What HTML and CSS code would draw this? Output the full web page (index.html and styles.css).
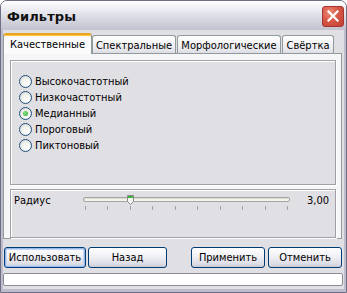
FILE: index.html
```html
<!DOCTYPE html>
<html>
<head>
<meta charset="utf-8">
<link rel="stylesheet" href="styles.css">
</head>
<body>
<div class="window">
  <div class="titlebar">
    <span class="title">Фильтры</span>
    <span class="close">
      <svg width="22" height="21" viewBox="0 0 22 21">
        <path d="M6.5 5.5 L15.5 14.5 M15.5 5.5 L6.5 14.5" stroke="#fff" stroke-width="2.2" stroke-linecap="square"/>
      </svg>
    </span>
  </div>
  <div class="client">
    <div class="tabs">
      <div class="tab active">Качественные</div>
      <div class="tab t2">Спектральные</div>
      <div class="tab t3">Морфологические</div>
      <div class="tab t4">Свёртка</div>
    </div>
    <div class="panel">
      <div class="group radios">
        <label class="radio"><span class="dot"></span>Высокочастотный</label>
        <label class="radio"><span class="dot"></span>Низкочастотный</label>
        <label class="radio"><span class="dot checked"></span>Медианный</label>
        <label class="radio"><span class="dot"></span>Пороговый</label>
        <label class="radio"><span class="dot"></span>Пиктоновый</label>
      </div>
      <div class="group slidergroup">
        <span class="label">Радиус</span>
        <div class="slider">
          <div class="track"></div>
          <svg class="thumb" width="7" height="10" viewBox="0 0 7 10">
            <path d="M0.5 0.5 H6.5 V6.5 L3.5 9.5 L0.5 6.5 Z" fill="#f4f4f4" stroke="#8a8a8a"/>
            <rect x="1" y="1" width="5" height="2" fill="#3cb43c"/>
          </svg>
          <div class="ticks">
            <i></i><i></i><i></i><i></i><i></i><i></i><i></i><i></i><i></i><i></i>
          </div>
        </div>
        <span class="value">3,00</span>
      </div>
    </div>
    <div class="buttons">
      <button class="btn default b1">Использовать</button>
      <button class="btn b2">Назад</button>
      <span class="spacer"></span>
      <button class="btn b3">Применить</button>
      <button class="btn b4">Отменить</button>
    </div>
    <div class="status"></div>
  </div>
</div>
</body>
</html>
```
FILE: styles.css
```css
html, body {
  margin: 0;
  padding: 0;
  background: #fff;
}
.window {
  width: 347px;
  height: 293px;
  box-sizing: border-box;
  background: #e0dfe3;
  border: 1px solid #6f6f84;
  border-radius: 7px 7px 0 0;
  overflow: hidden;
  display: flex;
  flex-direction: column;
  font-family: "DejaVu Sans Condensed", "DejaVu Sans", sans-serif;
  font-size: 11px;
  color: #000;
}
.titlebar {
  height: 29px;
  flex: none;
  display: flex;
  align-items: center;
  justify-content: space-between;
  padding: 0 2px 0 6px;
  background: linear-gradient(#ffffff 0%, #ececf2 30%, #d6d6e0 65%, #c2c2d0 100%);
}
.title {
  font-family: "DejaVu Sans", sans-serif;
  font-weight: bold;
  font-size: 13px;
  color: #111;
  letter-spacing: 0.1px;
  padding-top: 2px;
}
.close {
  width: 22px;
  height: 21px;
  margin-top: 2px;
  border-radius: 3px;
  border: 1px solid #a83434;
  box-sizing: border-box;
  background: radial-gradient(circle at 35% 30%, #ee8c78 0%, #d85848 45%, #c0402f 100%);
  display: flex;
  align-items: center;
  justify-content: center;
}
.close svg { display: block; margin: -1px; }
.client {
  flex: 1;
  display: flex;
  flex-direction: column;
  border-left: 2px solid #bcbccc;
  border-right: 2px solid #bcbccc;
  border-bottom: 3px solid #bcbccc;
}
.tabs {
  display: flex;
  align-items: flex-end;
  height: 20px;
  margin-top: 3px;
  position: relative;
  z-index: 1;
}
.tab {
  box-sizing: border-box;
  height: 18px;
  border: 1px solid #919b9c;
  border-bottom: none;
  border-radius: 3px 3px 0 0;
  background: linear-gradient(#ffffff, #ececf0 70%, #dcdce4);
  display: flex;
  align-items: center;
  justify-content: center;
  padding-top: 1px;
}
.tab.active {
  height: 21px;
  width: 89px;
  margin-bottom: -1px;
  background: #fbfbfc;
  border-top: 2px solid #e7a521;
  box-shadow: inset 0 1px 0 #ffc73c;
  padding-top: 0;
}
.t2 { width: 84px; }
.t3 { width: 104px; margin-left: 1px; }
.t4 { width: 52px; margin-left: 1px; }
.panel {
  box-sizing: border-box;
  height: 186px;
  margin: 0 2px 0 0;
  border: 1px solid #919b9c;
  background: #f6f6f8;
  padding: 6px 5px 0 6px;
  display: flex;
  flex-direction: column;
  gap: 4px;
}
.group {
  box-sizing: border-box;
  background: #e0dfe3;
  border: 1px solid #a0a0a8;
  box-shadow: 1px 1px 0 #ffffff, inset 1px 1px 0 #ffffff;
}
.radios {
  height: 125px;
  padding: 14px 0 0 8px;
  display: flex;
  flex-direction: column;
  gap: 3px;
}
.radio {
  display: flex;
  align-items: center;
  height: 13px;
  gap: 3px;
}
.dot {
  box-sizing: border-box;
  width: 13px;
  height: 13px;
  border-radius: 50%;
  border: 1px solid #1c5180;
  background: radial-gradient(circle at 60% 65%, #ffffff 0%, #f0f0ec 45%, #d8d8d0 100%);
  display: flex;
  align-items: center;
  justify-content: center;
}
.dot.checked::after {
  content: "";
  width: 5px;
  height: 5px;
  border-radius: 50%;
  background: radial-gradient(circle at 40% 40%, #8ce68c, #21a121);
}
.slidergroup {
  height: 49px;
  display: flex;
  align-items: flex-start;
  padding: 4px 6px 0 3px;
}
.label {
  width: 69px;
  line-height: 14px;
}
.slider {
  position: relative;
  width: 207px;
  height: 20px;
  margin-top: 2px;
}
.track {
  box-sizing: border-box;
  height: 5px;
  margin-top: 1px;
  border: 1px solid #a5a5a5;
  border-radius: 2px;
  background: #f4f4ea;
  box-shadow: inset 1px 1px 0 #dcdcd4;
}
.thumb {
  position: absolute;
  left: 44px;
  top: -1px;
}
.ticks {
  display: flex;
  justify-content: space-between;
  padding: 0 2px;
  margin-top: 4px;
}
.ticks i {
  display: block;
  width: 1px;
  height: 4px;
  background: #a0a0a0;
}
.value {
  flex: 1;
  text-align: right;
  line-height: 14px;
}
.buttons {
  display: flex;
  margin: 8px 2px 0 1px;
  height: 21px;
}
.spacer { flex: 1; }
.btn {
  box-sizing: border-box;
  height: 21px;
  font-family: "DejaVu Sans Condensed", "DejaVu Sans", sans-serif;
  font-size: 11px;
  color: #000;
  border: 1px solid #003c74;
  border-radius: 3px;
  background: linear-gradient(#ffffff 0%, #f2f2f6 40%, #dcdce6 85%, #c8c8d4 100%);
  padding: 0;
  margin: 0;
}
.btn.default {
  box-shadow: inset 0 0 0 1px #97b8e8, inset 0 0 0 2px #c4d8f6;
}
.b1 { width: 82px; }
.b2 { width: 79px; margin-left: 2px; }
.b3 { width: 74px; }
.b4 { width: 74px; margin-left: 3px; }
.status {
  height: 13px;
  margin: 5px 1px 0 0;
  box-sizing: border-box;
  border: 1px solid #8c8c98;
  border-radius: 2px;
  background: #fff;
}
```
